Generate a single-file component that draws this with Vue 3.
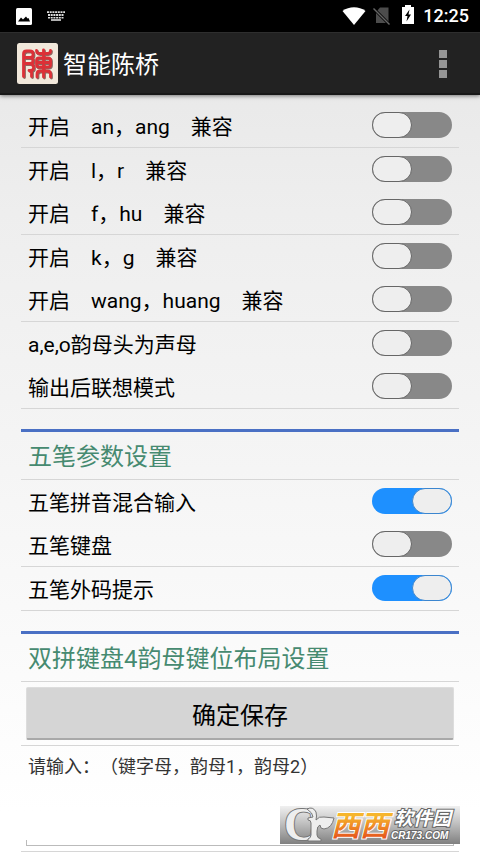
<script setup>
import { reactive, ref } from 'vue'

const fuzzy = reactive([
  { id: 'an', label: '开启　an，ang　兼容', on: false, line: true },
  { id: 'lr', label: '开启　l，r　兼容', on: false, line: false },
  { id: 'fhu', label: '开启　f，hu　兼容', on: false, line: true },
  { id: 'kg', label: '开启　k，g　兼容', on: false, line: false },
  { id: 'wang', label: '开启　wang，huang　兼容', on: false, line: true },
  { id: 'aeo', label: 'a,e,o韵母头为声母', on: false, line: false },
  { id: 'assoc', label: '输出后联想模式', on: false, line: true }
])

const wubi = reactive([
  { id: 'mix', label: '五笔拼音混合输入', on: true, line: false },
  { id: 'board', label: '五笔键盘', on: false, line: true },
  { id: 'hint', label: '五笔外码提示', on: true, line: true }
])

const keys = ref('')
</script>

<template>
  <div class="page">
    <div class="status">
      <div class="status-side">
        <svg width="16" height="17" viewBox="0 0 16 17">
          <rect width="16" height="17" rx="1.5" fill="#fff" />
          <path d="M2 13.500L5 9.500L7 11.500L8.500 10L10 8.500L11.500 10.500L12.500 10L14 13.500Z" fill="#000" />
        </svg>
        <svg width="18" height="10" viewBox="0 0 18 10" fill="none" stroke="#ddd">
          <path d="M0 1.2H18" stroke-width="1.8" stroke-dasharray="2 .7" />
          <path d="M1 4H17" stroke-width="1.8" stroke-dasharray="2 .7" />
          <path d="M1 6.7H17" stroke-width="1.6" stroke-dasharray="2 .7" />
          <path d="M4 9H14" stroke-width="1.6" />
        </svg>
      </div>
      <div class="status-side right">
        <svg width="24" height="18" viewBox="0 0 24 18">
          <path d="M0.5 4 C7 -1 17 -1 23.5 4 L12 18 Z" fill="#fff" />
        </svg>
        <svg class="sim" width="18" height="18" viewBox="0 0 18 18">
          <path d="M7 0.5H15.5V16H3V5Z" fill="#4c4c4c" />
          <path d="M0 1L17 18" stroke="#000" stroke-width="3" />
          <path d="M0.5 1.5L16.5 17.5" stroke="#666" stroke-width="1.4" />
        </svg>
        <svg class="battery" width="12" height="19" viewBox="0 0 12 19">
          <path d="M3 0H9V2H12V19H0V2H3Z" fill="#fff" />
          <path d="M7.5 4.5L3 11H5.5L4.5 16.5L9 9.5H6.5Z" fill="#000" />
        </svg>
        <span class="clock">12:25</span>
      </div>
    </div>

    <header class="bar">
      <svg class="seal" width="41" height="41" viewBox="0 0 41 41">
        <rect width="41" height="41" rx="2.5" fill="#f1e8db" />
        <defs>
          <path id="seal-lines" d="M6.500 33.500V11Q6.500 8 9.500 8H13Q16 8 16 11V12Q16 14.500 13 14.500H7M13 14.500Q16 15 16 17.500Q16 20.500 13 20.500H7M13 20.500Q16.500 21 16.500 24V25Q16.500 27.500 13 27.500H12M14.500 27.500V33.500M26.500 7V34M19.500 7.500Q19.500 10.500 22.500 10.500H30.500Q33.500 10.500 33.500 7.500M22 15H31Q33.500 15 33.500 17.500V21.500Q33.500 24 31 24H22Q19.500 24 19.500 21.500V17.500Q19.500 15 22 15ZM20 19.500H33M20 34V31Q20 28 23 28H30Q33.500 28 33.500 31V34" />
        </defs>
        <g fill="none" stroke-linecap="round" stroke-linejoin="round" stroke-width="2.8">
          <use href="#seal-lines" x="1" y="1" stroke="#8d6660" />
          <use href="#seal-lines" stroke="#dc3037" />
        </g>
      </svg>
      <h1>智能陈桥</h1>
      <button class="more" type="button" aria-label="更多">
        <i></i><i></i><i></i>
      </button>
    </header>

    <main class="list">
      <section class="group">
        <label v-for="o in fuzzy" :key="o.id" class="row" :class="{ line: o.line }">
          <span>{{ o.label }}</span>
          <input v-model="o.on" class="switch" type="checkbox" role="switch" />
        </label>
      </section>

      <section class="group">
        <h2>五笔参数设置</h2>
        <label v-for="o in wubi" :key="o.id" class="row" :class="{ line: o.line }">
          <span>{{ o.label }}</span>
          <input v-model="o.on" class="switch" type="checkbox" role="switch" />
        </label>
      </section>

      <section class="group">
        <h2>双拼键盘4韵母键位布局设置</h2>
        <div class="action">
          <button class="save" type="button">确定保存</button>
        </div>
        <div class="field">
          <label for="keys">请输入：（键字母，韵母1，韵母2）</label>
          <input id="keys" v-model="keys" class="entry" type="text" />
          <div class="mark">
            <svg width="180" height="50" viewBox="0 -12 180 50">
              <defs>
                <linearGradient id="ember" x1="0" y1="0" x2="0" y2="1">
                  <stop offset="0.2" stop-color="#f6b52c" />
                  <stop offset="0.9" stop-color="#e4511c" />
                </linearGradient>
              </defs>
              <text class="mark-c" x="4" y="34">C</text>
              <path d="M27 3Q33 0 36 6Q37 10 36 14Q39 10 44 11L54 12Q52 22 44 23Q40 23 40 19Q37 20 37 25V29Q37 32 41 33V35H28V33Q31 32 31 29V17Q31 14 28 14V12L33 11Q33 7 27 3Z" fill="#eee" stroke="#777" stroke-width="1" />
              <text class="mark-west" x="51" y="30">西西</text>
              <text class="mark-soft" x="114" y="19">软件园</text>
              <text class="mark-site" x="111" y="33">CR173.COM</text>
            </svg>
          </div>
        </div>
      </section>
    </main>
  </div>
</template>

<style>
body {
  margin: 0;
  background: #fff;
}
</style>

<style scoped>
.page {
  min-height: 100vh;
  box-sizing: border-box;
  font-family: Roboto, "Noto Sans CJK SC", sans-serif;
  text-spacing-trim: space-all;
  color: #000;
  background: linear-gradient(#e6e6e6, #eee 25%, #f5f5f5 55%, #fff 95%);
}
.status {
  display: flex;
  justify-content: space-between;
  height: 32px;
  padding: 0 11px 0 16px;
  background: #000;
}
.status-side {
  display: flex;
  align-items: center;
  gap: 15px;
}
.status-side.right {
  gap: 7px;
}
.battery {
  margin: 0 2px 3px 4px;
}
.clock {
  font-size: 18px;
  font-weight: 500;
  line-height: 32px;
  color: #fff;
}
.bar {
  display: flex;
  align-items: center;
  gap: 5px;
  height: 63px;
  box-sizing: border-box;
  padding: 0 25px 0 17px;
  background: #222;
  border-top: 1px solid #2e2e2e;
  border-bottom: 2px solid #181818;
  box-shadow: 0 1px 4px rgba(0, 0, 0, 0.5);
}
h1 {
  flex: 1;
  margin: 0;
  padding-top: 4px;
  font-size: 24px;
  font-weight: 400;
  line-height: 32px;
  color: #fff;
}
.more {
  display: flex;
  flex-direction: column;
  gap: 2px;
  padding: 10px 8px 8px;
  border: 0;
  background: none;
}
.more i {
  width: 8px;
  height: 8px;
  background: #959595;
}
.list {
  margin: 0 21px;
  padding-top: 9px;
}
.group + .group {
  margin-top: 20px;
  border-top: 3px solid #4a70c4;
}
h2 {
  margin: 0;
  padding: 4px 7px 0;
  font-size: 24px;
  font-weight: 400;
  line-height: 43px;
  color: #468a70;
  border-bottom: 1px solid #d6d6d6;
}
.row {
  display: flex;
  align-items: flex-start;
  justify-content: space-between;
  padding: 8px 7px 5px;
}
.row span {
  font-size: 21px;
  line-height: 30px;
}
.row.line {
  border-bottom: 1px solid #d6d6d6;
}
.switch {
  appearance: none;
  flex: none;
  display: flex;
  width: 80px;
  height: 26px;
  margin: 0;
  border-radius: 13px;
  background: #888;
}
.switch::before {
  content: "";
  box-sizing: border-box;
  width: 40px;
  height: 26px;
  border: 1px solid #666;
  border-radius: 13px;
  background: #eee;
}
.switch:checked {
  justify-content: flex-end;
  background: #1e90ff;
}
.switch:checked::before {
  border-color: #3c86cf;
}
.action {
  padding: 5px;
  border-bottom: 1px solid #d6d6d6;
}
.save {
  display: block;
  width: 100%;
  height: 53px;
  padding: 0;
  border: 1px solid #ddd;
  border-bottom: 2px solid #a9a9a9;
  border-radius: 2px;
  background: #d5d5d5;
  font-family: inherit;
  font-size: 24px;
  color: #000;
}
.field {
  position: relative;
  padding: 0 5px 5px;
  border-bottom: 1px solid #d6d6d6;
}
.field label {
  display: block;
  padding: 2px 2px 0;
  font-size: 18px;
  line-height: 38px;
  color: #333;
}
.entry {
  display: block;
  box-sizing: border-box;
  width: 100%;
  height: 60px;
  padding: 0 8px;
  border: 0;
  outline: 0;
  font-family: inherit;
  font-size: 21px;
  background:
    linear-gradient(#bbb, #bbb) left bottom / 100% 1px no-repeat,
    linear-gradient(#bbb, #bbb) left bottom / 1px 6px no-repeat,
    linear-gradient(#bbb, #bbb) right bottom / 1px 6px no-repeat;
}
.mark {
  position: absolute;
  right: -1px;
  bottom: 7px;
  background: linear-gradient(transparent 12px, #f0f0f0 12px, #c4c4c4 28px, #808080);
}
.mark svg {
  display: block;
}
.mark text {
  font-family: "Liberation Sans", "Noto Sans CJK SC", sans-serif;
  font-weight: 700;
  paint-order: stroke;
}
.mark .mark-c {
  font-family: "Liberation Serif", serif;
  font-size: 46px;
  fill: #eee;
  stroke: #777;
  stroke-width: 2px;
}
.mark .mark-west {
  font-size: 29px;
  font-style: italic;
  fill: url(#ember);
  stroke: #fff;
  stroke-width: 2px;
}
.mark .mark-soft {
  font-size: 19px;
  font-style: italic;
  fill: #fff;
  stroke: #666;
  stroke-width: 2px;
}
.mark .mark-site {
  font-size: 10px;
  font-style: italic;
  fill: #fff;
  stroke: #666;
  stroke-width: 2px;
}
</style>
